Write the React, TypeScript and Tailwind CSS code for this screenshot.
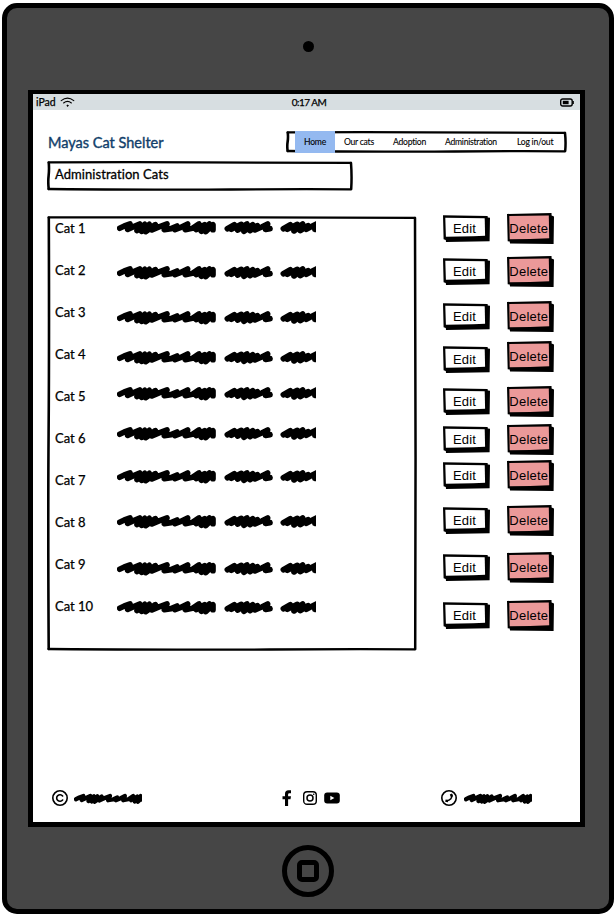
import React from "react";

const SCRIBBLE =
  "M8 25 L22 18 L39 12 L32 28 L50 20 L68 12 L60 32 L83 13 L74 34 L97 13 L86 35 L115 14 L105 30 L128 20 L150 12 L142 29 L162 26 L180 18 L174 29 L192 22 L212 12 L205 29 L226 25 L246 12 L238 29 L263 14 L253 34 L277 12 L266 35 L288 14 L288 29";
const SCRIBBLE_MID =
  "M331 26 L352 14 L343 28 L373 13 L362 30 L390 12 L381 34 L407 14 L399 32 L421 17 L414 30 L434 21 L452 12 L446 28 L459 26";
const SCRIBBLE_END =
  "M499 26 L520 14 L511 28 L541 13 L531 33 L557 12 L550 32 L573 17 L568 28 L585 19 L600 11 L594 28";

function NameScribble({ className }: { className: string }) {
  return (
    <svg className={`block h-[15px] w-[199px] shrink-0 overflow-hidden ${className}`} viewBox="0 0 597 45" fill="none" stroke="black" strokeWidth="17" strokeLinecap="round" strokeLinejoin="round">
      <path d={SCRIBBLE} />
      <path d={SCRIBBLE_MID} />
      <path d={SCRIBBLE_END} />
    </svg>
  );
}

function ShortScribble({ className }: { className: string }) {
  return (
    <svg className={`block h-[11px] w-[68px] shrink-0 overflow-hidden ${className}`} viewBox="0 0 283 44" preserveAspectRatio="none" fill="none" stroke="black" strokeWidth="17" strokeLinecap="round" strokeLinejoin="round">
      <path d={SCRIBBLE} />
    </svg>
  );
}

function Outline({ w, h }: { w: number; h: number }) {
  return (
    <svg className="pointer-events-none absolute inset-0" width={w} height={h} fill="none" stroke="black" strokeLinecap="round" strokeLinejoin="round">
      <path d={`M1.6 1.4 Q${w * 0.3} 1 ${w * 0.5} 1.4 T${w - 2} 1.9`} strokeWidth="2.3" />
      <path d={`M${w - 2} 2 Q${w - 1} ${h * 0.5} ${w - 1.8} ${h - 2}`} strokeWidth="2.5" />
      <path d={`M1.6 ${h - 2} Q${w * 0.4} ${h - 1} ${w * 0.6} ${h - 1.5} T${w - 2} ${h - 1.7}`} strokeWidth="2.3" />
      <path d={`M1.8 1.8 Q2.3 ${h * 0.3} 1.6 ${h * 0.5} T1.7 ${h - 2}`} strokeWidth="2.6" />
    </svg>
  );
}

function EditButton({ className }: { className: string }) {
  return (
    <button className={`relative block h-[27px] w-[47px] shrink-0 text-[13px] leading-[22px] ${className}`}>
      <svg className="absolute inset-0" width="47" height="27">
        <path d="M0 .3 L44.6 1.1 L44.8 2.6 L47 2.8 L46.6 26.3 L3 26.9 L2.8 25 L.6 24.2Z" fill="black" />
        <path d="M2.3 2.8 L41.7 3.3 L42.1 20.8 L30 21.2 L2.9 21.8Z" fill="white" />
      </svg>
      <span className="relative block pr-[4px] text-center tracking-[0.1px]">Edit</span>
    </button>
  );
}

function DeleteButton({ className }: { className: string }) {
  return (
    <button className={`relative block h-[31px] w-[47px] shrink-0 text-[13px] leading-[30px] ${className}`}>
      <svg className="absolute inset-0" width="47" height="31">
        <path d="M0 .9 L44.5 .1 L44.6 2.6 L47 3.4 L46.6 31 L3 30.6 L2.7 28.5 L.7 28.2Z" fill="black" />
        <path d="M2.3 3 L41.8 2.4 L42.2 25.3 L23 26 L2.7 26.2Z" fill="#eb9999" />
      </svg>
      <span className="relative block pr-[3.5px] text-center tracking-[0.2px]">Delete</span>
    </button>
  );
}

const scribbles = ["mt-0", "mt-[30px]", "mt-[30px]", "mt-[25px]", "mt-[21px]", "mt-[25px]", "mt-[28px]", "mt-[30px]", "mt-[32px]", "mt-[24px]"];
const edits = ["mt-0", "mt-[16px]", "mt-[18px]", "mt-[16px]", "mt-[15px]", "mt-[11px]", "mt-[9px]", "mt-[18px]", "mt-[20px]", "mt-[21px]"];
const deletes = ["mt-0", "mt-[12px]", "mt-[14px]", "mt-[9px]", "mt-[14px]", "mt-[7px]", "mt-[5px]", "mt-[14px]", "mt-[16px]", "mt-[17px]"];

export default function App() {
  return (
    <div className="h-[916px] w-[616px] bg-white pl-[2px] pt-[3px] font-['Liberation_Sans',Arial,sans-serif] text-black">
      <div className="flex h-[911px] w-[612px] flex-col rounded-[15px] border-[5px] border-black bg-[#464646]">
        <div className="flex h-[82px] justify-center pt-[33px]">
          <div className="h-[11px] w-[11px] rounded-full bg-black" />
        </div>
        <main className="ml-[21px] flex h-[737px] w-[557px] flex-col border-[5px] border-t-[4px] border-black bg-white font-[Lato,sans-serif] [font-variant-ligatures:none]">
          <div className="grid h-[16px] shrink-0 grid-cols-3 items-center bg-[#d7dee1] pl-[3px] pr-[6px] text-[10px] leading-[16px] [-webkit-text-stroke:0.25px_black]">
            <div className="flex items-center gap-[4px]">
              <span className="text-[10.5px]">iPad</span>
              <svg width="15" height="12" fill="none" stroke="black" strokeLinecap="round">
                <path d="M1.2 4.6 Q7.5 -.4 13.8 4.6" strokeWidth="1.1" />
                <path d="M3.6 7 Q7.5 3.8 11.4 7" strokeWidth="1.1" />
                <circle cx="7.5" cy="9.7" r=".6" fill="black" strokeWidth=".8" />
              </svg>
            </div>
            <span className="whitespace-nowrap pl-[5px] text-center text-[10px] leading-[15px] tracking-[-0.5px]"><span className="pl-[3px]">0:17 AM</span></span>
            <svg className="justify-self-end" width="14" height="9" fill="none" stroke="black">
              <rect x=".7" y="1" width="11.5" height="7" rx="2" strokeWidth="1.4" />
              <path d="M13.2 3 V6" strokeWidth="1.3" />
              <rect x="2.8" y="2.8" width="5.8" height="3.4" fill="black" stroke="none" />
            </svg>
          </div>

          <header className="mt-[21px] flex h-[22px] shrink-0">
            <h1 className="ml-[15px] w-[238px] pt-[2px] text-[14.5px] leading-[20px] text-[#123f6b] [-webkit-text-stroke:0.4px_#123f6b]">Mayas Cat Shelter</h1>
            <nav className="relative flex h-[22px] w-[281px] text-[8.6px] leading-[22px] tracking-[-0.25px] [-webkit-text-stroke:0.1px_black]">
              <Outline w={281} h={22} />
              <a className="relative ml-[9px] w-[40px] bg-[#94b9f0] text-center">Home</a>
              <a className="ml-[9px] w-[49px]">Our cats</a>
              <a className="w-[52px]">Adoption</a>
              <a className="w-[72px] whitespace-nowrap">Administration</a>
              <a className="whitespace-nowrap">Log in/out</a>
            </nav>
          </header>

          <div className="relative ml-[14px] mt-[8px] h-[30px] w-[306px] shrink-0 pl-[8px] text-[13px] leading-[26px] tracking-[0.06px] [-webkit-text-stroke:0.3px_black]">
            <Outline w={306} h={30} />
            Administration Cats
          </div>

          <section className="ml-[14px] mt-[23px] flex h-[437px] shrink-0 items-start">
            <div className="relative mt-[2px] flex h-[435px] w-[370px] pl-[8px]">
              <Outline w={370} h={435} />
              <ul className="-mt-[9px] w-[62px] text-[13px] leading-[42px] [-webkit-text-stroke:0.25px_black]">
                {scribbles.map((_, i) => <li key={i} className="h-[42px]">Cat {i + 1}</li>)}
              </ul>
              <div className="pt-[4px]">
                {scribbles.map((m, i) => <NameScribble key={i} className={m} />)}
              </div>
            </div>
            <div className="ml-[26px] mt-[1px] font-['Liberation_Sans',Arial,sans-serif]">
              {edits.map((m, i) => <EditButton key={i} className={m} />)}
            </div>
            <div className="-mt-[1px] ml-[17px] font-['Liberation_Sans',Arial,sans-serif]">
              {deletes.map((m, i) => <DeleteButton key={i} className={m} />)}
            </div>
          </section>

          <footer className="mb-[15px] mt-auto flex h-[18px] items-center pl-[18px]">
            <svg width="18" height="18" fill="none" stroke="black" strokeWidth="1.6">
              <circle cx="9" cy="9" r="7.2" />
              <path d="M11.6 7 A3.3 3.3 0 1 0 11.6 11" strokeLinecap="round" />
            </svg>
            <ShortScribble className="ml-[5px]" />
            <svg className="ml-[140px]" width="10" height="18">
              <path d="M3 17 V10.2 H.5 V7.3 H3 V5 Q3 1.3 6.5 1.3 H9 V4.2 H7.3 Q6.1 4.2 6.1 5.5 V7.3 H9 L8.5 10.2 H6.1 V17Z" />
            </svg>
            <svg className="ml-[10px]" width="16" height="18" fill="none" stroke="black">
              <rect x="1.7" y="2.7" width="12.6" height="12.6" rx="3.4" strokeWidth="1.4" />
              <circle cx="8" cy="9" r="3" strokeWidth="1.5" />
              <circle cx="11.7" cy="5.3" r=".8" fill="black" stroke="none" />
            </svg>
            <svg className="ml-[6px]" width="16" height="18">
              <rect x=".2" y="3.5" width="15.6" height="11" rx="3" />
              <path d="M6.3 6.7 L10.4 9 L6.3 11.3Z" fill="white" />
            </svg>
            <svg className="ml-[100px]" width="18" height="18" fill="none" stroke="black">
              <circle cx="9" cy="9" r="7.2" strokeWidth="1.6" />
              <path d="M11.7 5.7 Q12.8 10.8 6.2 12" strokeWidth="1.5" />
              <path d="M10.9 5 L12 7.7 M5.4 11.6 L8.1 12.2" strokeWidth="2.4" />
            </svg>
            <ShortScribble className="ml-[6px]" />
          </footer>
        </main>
        <div className="flex flex-1 items-center justify-center pt-[6px]">
          <button className="flex h-[52px] w-[52px] items-center justify-center rounded-full border-[5px] border-black">
            <span className="h-[22px] w-[22px] rounded-[5px] border-[5px] border-black" />
          </button>
        </div>
      </div>
    </div>
  );
}
